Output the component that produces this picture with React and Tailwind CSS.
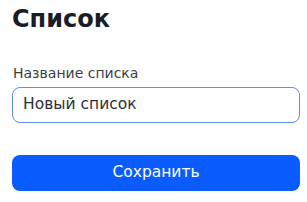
export default function App() {
  return (
    <div className="w-[307px] h-[202px] bg-white px-[12px] pt-[3px] font-[family-name:'DejaVu_Sans',sans-serif]">
      <h1 className="text-[24px] leading-[32px] font-bold text-[#1b1d26]">Список</h1>
      <div className="mt-[29px] pl-[1px] text-[14px] leading-[18px] text-[#3a3d46]">Название списка</div>
      <div className="mt-[5px] h-[36px] w-[288px] rounded-[8px] border-[1.5px] border-[#5b8cf5] flex items-center pl-[10px] text-[15.5px] text-[#2b2f3a]">
        Новый список
      </div>
      <button className="mt-[32px] h-[36px] w-[288px] rounded-[8px] bg-[#0a5cff] text-white text-[15.5px] flex items-center justify-center">
        Сохранить
      </button>
    </div>
  );
}
